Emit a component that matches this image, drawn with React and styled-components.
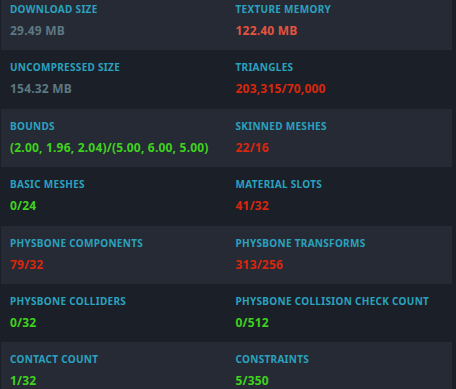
import React from 'react';
import styled, { createGlobalStyle } from 'styled-components';

const GlobalStyle = createGlobalStyle`
  html, body {
    margin: 0;
    padding: 0;
    background: #1b1f28;
    overflow: hidden;
  }
`;

const Panel = styled.div`
  width: 456px;
  height: 389px;
  overflow: hidden;
  background: #1b1f28;
  font-family: "Noto Sans", "DejaVu Sans", sans-serif;
`;

const List = styled.div`
  display: flex;
  flex-direction: column;
  margin-top: -8px;
`;

const Row = styled.div`
  display: grid;
  grid-template-columns: 1fr 1fr;
  height: 58.4px;
  margin: 0 4px 0 1px;
  background: ${(p) => (p.$shaded ? '#262a35' : 'transparent')};
`;

const Cell = styled.div`
  display: flex;
  flex-direction: column;
  padding: 10px 0 0 9px;
`;

const Label = styled.div`
  color: #2aa2bf;
  font-size: 10px;
  font-weight: 700;
  letter-spacing: 0.3px;
  line-height: 14px;
  text-transform: uppercase;
  white-space: nowrap;
`;

const Value = styled.div`
  margin-top: 7px;
  color: ${(p) => p.$color};
  font-size: 12px;
  font-weight: 700;
  letter-spacing: 0.2px;
  line-height: 16px;
  white-space: nowrap;
`;

const COLORS = {
  grey: '#5c7882',
  warn: '#e4543f',
  bad: '#d8270d',
  good: '#3fd21d',
};

const stats = [
  [
    { label: 'Download Size', value: '29.49 MB', tone: 'grey' },
    { label: 'Texture Memory', value: '122.40 MB', tone: 'warn' },
  ],
  [
    { label: 'Uncompressed Size', value: '154.32 MB', tone: 'grey' },
    { label: 'Triangles', value: '203,315/70,000', tone: 'bad' },
  ],
  [
    { label: 'Bounds', value: '(2.00, 1.96, 2.04)/(5.00, 6.00, 5.00)', tone: 'good' },
    { label: 'Skinned Meshes', value: '22/16', tone: 'bad' },
  ],
  [
    { label: 'Basic Meshes', value: '0/24', tone: 'good' },
    { label: 'Material Slots', value: '41/32', tone: 'bad' },
  ],
  [
    { label: 'PhysBone Components', value: '79/32', tone: 'bad' },
    { label: 'PhysBone Transforms', value: '313/256', tone: 'bad' },
  ],
  [
    { label: 'PhysBone Colliders', value: '0/32', tone: 'good' },
    { label: 'PhysBone Collision Check Count', value: '0/512', tone: 'good' },
  ],
  [
    { label: 'Contact Count', value: '1/32', tone: 'good' },
    { label: 'Constraints', value: '5/350', tone: 'good' },
  ],
];

const App = () => {
  return (
    <Panel>
      <GlobalStyle />
      <List>
        {stats.map((row, i) => (
          <Row key={i} $shaded={i % 2 === 0}>
            {row.map((s) => (
              <Cell key={s.label}>
                <Label>{s.label}</Label>
                <Value $color={COLORS[s.tone]}>{s.value}</Value>
              </Cell>
            ))}
          </Row>
        ))}
      </List>
    </Panel>
  );
};

export default App;
